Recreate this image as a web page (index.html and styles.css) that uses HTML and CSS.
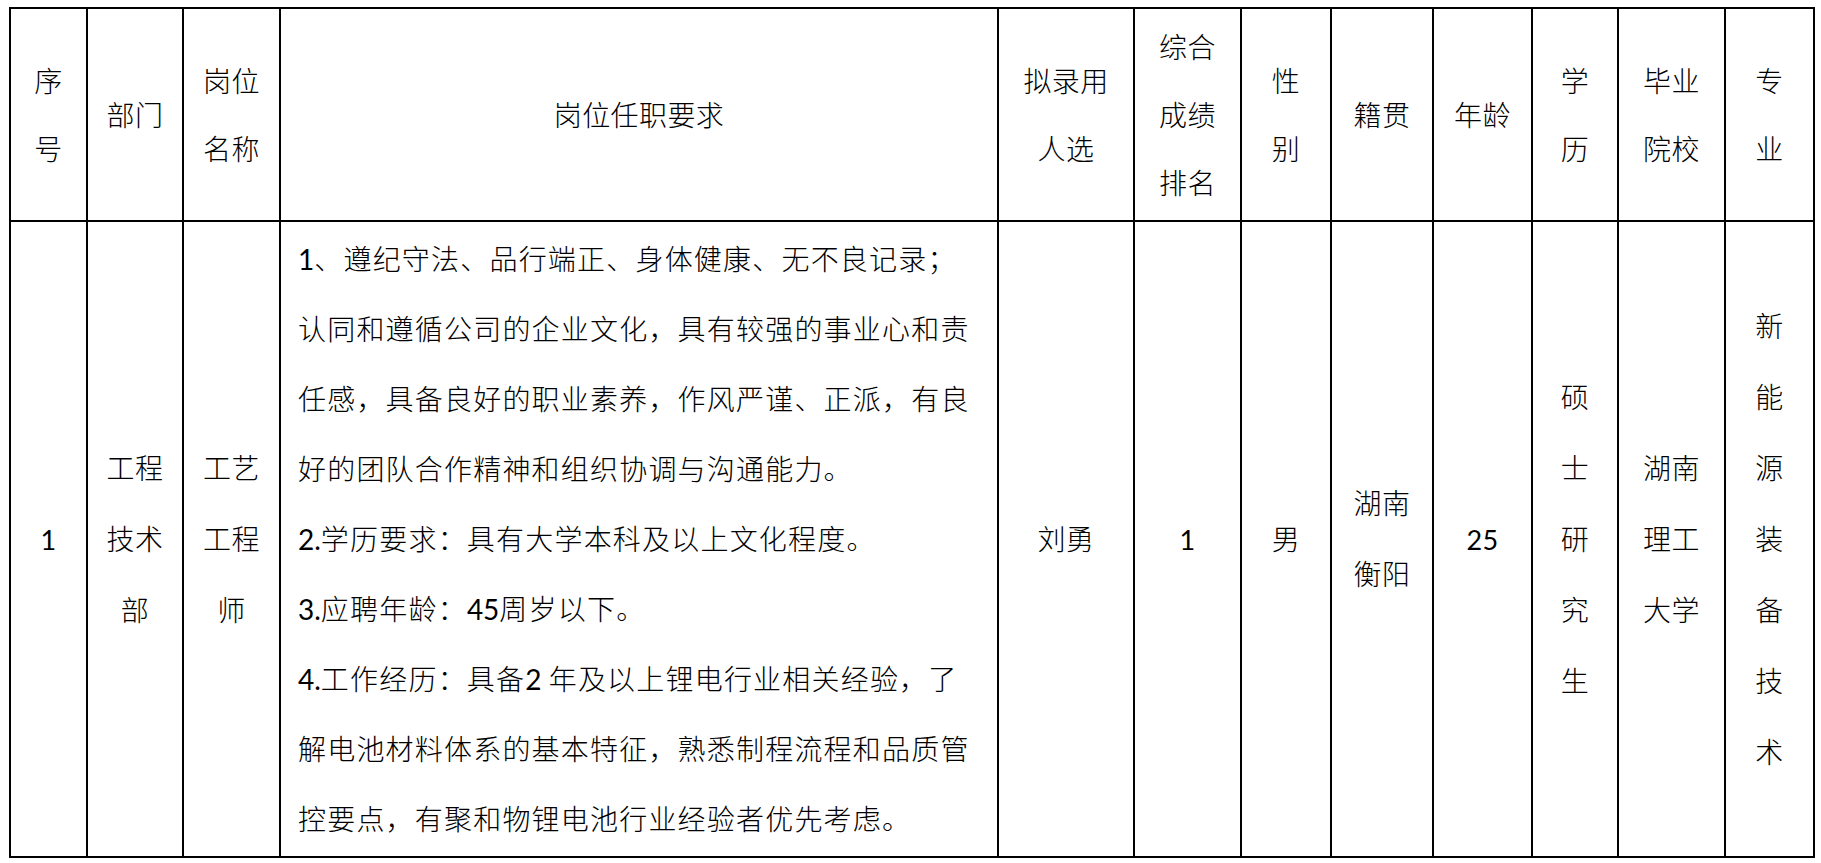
FILE: index.html
```html
<!DOCTYPE html>
<html lang="zh-CN">
<head>
<meta charset="utf-8">
<title>拟录用人员公示</title>
<link rel="stylesheet" href="styles.css">
</head>
<body>
<table class="roster">
  <colgroup>
    <col class="c-no">
    <col class="c-dept">
    <col class="c-post">
    <col class="c-req">
    <col class="c-name">
    <col class="c-rank">
    <col class="c-sex">
    <col class="c-origin">
    <col class="c-age">
    <col class="c-edu">
    <col class="c-school">
    <col class="c-major">
  </colgroup>
  <thead>
    <tr class="head">
      <th>序<br>号</th>
      <th>部门</th>
      <th>岗位<br>名称</th>
      <th>岗位任职要求</th>
      <th>拟录用<br>人选</th>
      <th>综合<br>成绩<br>排名</th>
      <th>性<br>别</th>
      <th>籍贯</th>
      <th>年龄</th>
      <th>学<br>历</th>
      <th>毕业<br>院校</th>
      <th>专<br>业</th>
    </tr>
  </thead>
  <tbody>
    <tr class="row">
      <td class="num">1</td>
      <td>工程<br>技术<br>部</td>
      <td>工艺<br>工程<br>师</td>
      <td class="req">
        <div class="ln"><span class="lat">1</span>、遵纪守法、品行端正、身体健康、无不良记录；</div>
        <div class="ln">认同和遵循公司的企业文化，具有较强的事业心和责</div>
        <div class="ln">任感，具备良好的职业素养，作风严谨、正派，有良</div>
        <div class="ln">好的团队合作精神和组织协调与沟通能力。</div>
        <div class="ln"><span class="lat">2.</span>学历要求：具有大学本科及以上文化程度。</div>
        <div class="ln"><span class="lat">3.</span>应聘年龄：<span class="lat">45</span>周岁以下。</div>
        <div class="ln"><span class="lat">4.</span>工作经历：具备<span class="lat">2 </span>年及以上锂电行业相关经验，了</div>
        <div class="ln">解电池材料体系的基本特征，熟悉制程流程和品质管</div>
        <div class="ln">控要点，有聚和物锂电池行业经验者优先考虑。</div>
      </td>
      <td>刘勇</td>
      <td class="num">1</td>
      <td>男</td>
      <td>湖南<br>衡阳</td>
      <td class="num">25</td>
      <td>硕<br>士<br>研<br>究<br>生</td>
      <td>湖南<br>理工<br>大学</td>
      <td>新<br>能<br>源<br>装<br>备<br>技<br>术</td>
    </tr>
  </tbody>
</table>
</body>
</html>
```

FILE: styles.css
```css
html, body {
  background: #ffffff;
}

body {
  margin: 7px 0 0 9px;
  color: #000000;
  font-family: "Lato", "Noto Sans CJK SC", sans-serif;
}

.roster {
  border-collapse: collapse;
  table-layout: fixed;
  width: 1806px;
}

.c-no { width: 77px; }
.c-dept { width: 96px; }
.c-post { width: 97px; }
.c-req { width: 718px; }
.c-name { width: 136px; }
.c-rank { width: 107px; }
.c-sex { width: 90px; }
.c-origin { width: 102px; }
.c-age { width: 99px; }
.c-edu { width: 86px; }
.c-school { width: 107px; }
.c-major { width: 89px; }

.roster th,
.roster td {
  border: 2px solid #000000;
  padding: 0;
  text-align: center;
  vertical-align: middle;
  font-size: 28px;
  font-weight: 300;
  letter-spacing: 0.4px;
}

.head th {
  height: 211px;
  line-height: 68px;
}

.row td {
  height: 634px;
  line-height: 71px;
}

.row td.req {
  text-align: left;
  padding-left: 17px;
  line-height: 70px;
  letter-spacing: 1.2px;
  white-space: nowrap;
}

.lat {
  font-weight: 400;
  letter-spacing: 0;
}

.roster td.num {
  font-size: 27px;
  font-weight: 400;
}
```
